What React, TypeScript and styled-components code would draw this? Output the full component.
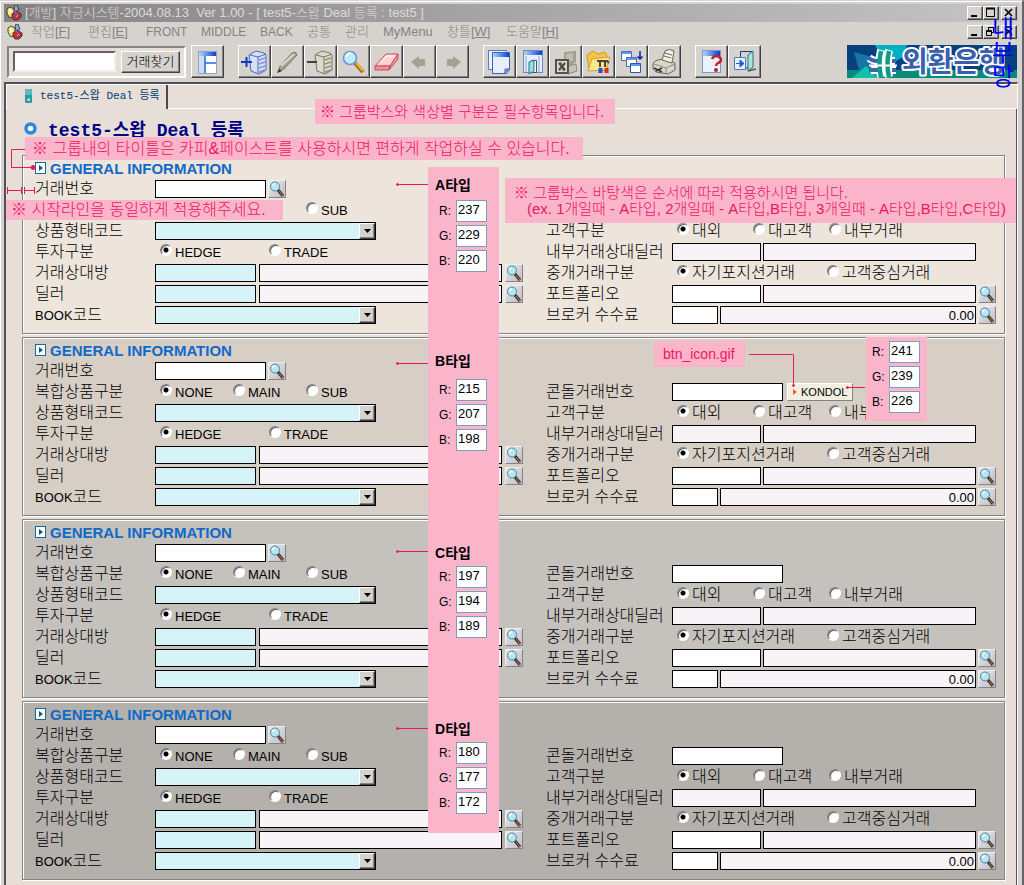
import React from 'react';
import styled, { createGlobalStyle, css } from 'styled-components';

const PINK = '#fbb5cb';
const MAGENTA = '#ee1460';
const FACE = '#d6d3ce';

const GlobalStyle = createGlobalStyle`
  * { box-sizing: border-box; }
  body {
    margin: 0;
    background: ${FACE};
    color: #000;
    font-family: 'Liberation Sans', 'Noto Sans CJK KR', sans-serif;
    font-weight: 300;
    font-size: 13px;
  }
  button, input, select { font: inherit; color: inherit; margin: 0; padding: 0; }
  h1, h2, p { margin: 0; }
`;

/* ---------- window frame ---------- */

const Window = styled.div`
  position: relative;
  display: flex;
  flex-direction: column;
  min-height: 100vh;
  min-width: 1024px;
  overflow: hidden;
  background: ${FACE};
  border-top: 1px solid ${FACE};
  border-right: 2px solid #63636b;
  padding: 3px 4px 0 4px;
  box-shadow: inset 1px 1px 0 #fff;
`;

const TitleBar = styled.header`
  display: flex;
  align-items: center;
  height: 18px;
  padding: 0 1px 0 2px;
  background: linear-gradient(to right, #848284, #a5a2a5 45%, #c6c3c6);
  color: #dedbd6;
  white-space: pre;
`;

const TitleText = styled.span`
  flex: 1;
  padding-left: 3px;
  line-height: 18px;
`;

const WindowButtons = styled.div`
  display: flex;
`;

const WindowButton = styled.button<{ $apart?: boolean }>`
  display: flex;
  width: 16px;
  height: 14px;
  margin-left: ${(p) => (p.$apart ? 2 : 0)}px;
  border: 1px solid;
  border-color: #fff #424142 #424142 #fff;
  box-shadow: inset -1px -1px 0 #848284;
  background: ${FACE};
`;

const MenuBar = styled.nav`
  display: flex;
  align-items: center;
  height: 20px;
  padding: 0 1px 0 3px;
  color: #848284;
`;

const MenuItems = styled.div`
  display: flex;
  flex: 1;
  padding-left: 8px;
`;

const MenuItem = styled.button<{ $w: number }>`
  width: ${(p) => p.$w}px;
  border: 0;
  background: none;
  text-align: left;
  white-space: nowrap;
  line-height: 18px;
`;

const MenuCaps = styled.span`
  font-size: 12px;
`;

const Spacer = styled.span`
  flex: 1;
`;

/* ---------- toolbar ---------- */

const Toolbar = styled.div`
  display: flex;
  align-items: center;
  height: 40px;
  padding: 0 1px 1px 3px;
`;

const SearchPanel = styled.form`
  display: flex;
  align-items: center;
  gap: 5px;
  width: 179px;
  height: 32px;
  margin-right: 5px;
  padding: 0 4px;
  background: #e7dfd7;
  border: 2px solid;
  border-color: #848284 #fff #fff #848284;
`;

const SearchInput = styled.input`
  flex: 1;
  min-width: 0;
  height: 21px;
  background: #fff;
  border: 2px solid;
  border-color: #63616b #efefef #efefef #63616b;
`;

const FindButton = styled.button`
  width: 59px;
  height: 22px;
  line-height: 18px;
  font-size: 13px;
  background: ${FACE};
  border: 1px solid;
  border-color: #fff #424142 #424142 #fff;
  box-shadow: inset -1px -1px 0 #848284;
`;

const ToolGroup = styled.div<{ $after?: number }>`
  display: flex;
  margin-right: ${(p) => p.$after ?? 0}px;
`;

const ToolButton = styled.button`
  display: flex;
  align-items: center;
  justify-content: center;
  width: 33px;
  height: 33px;
  background: ${FACE};
  border: 1px solid;
  border-color: #fff #424142 #424142 #fff;
  box-shadow: inset -1px -1px 0 #848284;
`;

/* ---------- workspace ---------- */

const Workspace = styled.main`
  flex: 1;
  display: flex;
  flex-direction: column;
  background: #e7dfd7;
  border: solid;
  border-width: 2px 1px 0 2px;
  border-color: #52515a #fff #fff #52515a;
`;

const TabBar = styled.div`
  display: flex;
  height: 25px;
  border-top: 1px solid #fff;
`;

const Tab = styled.button`
  display: flex;
  align-items: center;
  gap: 8px;
  width: 162px;
  padding: 0 0 3px 18px;
  border: 0;
  border-left: 1px solid #fff;
  border-right: 2px solid #4a494a;
  background: none;
  color: #003c73;
  font-family: 'Liberation Mono', 'Noto Sans CJK KR', monospace;
  font-size: 11px;
  font-weight: 400;
  line-height: 20px;
  white-space: pre;
`;

const TabRest = styled.div`
  flex: 1;
  border-bottom: 1px solid #fff;
`;

const Page = styled.div`
  flex: 1;
  padding: 10px 11px 5px 16px;
  border-right: 1px solid #52515a;
`;

const PageTitle = styled.h1`
  display: flex;
  align-items: center;
  gap: 11px;
  height: 20px;
  margin: 0 0 16px 2px;
  padding-bottom: 2px;
  color: #000084;
  font-family: 'Liberation Mono', 'Noto Sans CJK KR', monospace;
  font-size: 18px;
  font-weight: 700;
  white-space: pre;
`;

const Groups = styled.div`
  display: flex;
  flex-direction: column;
  gap: 3px;
`;

const Group = styled.section<{ $bg: string }>`
  padding: 0 8px 9px 12px;
  background: ${(p) => p.$bg};
  border: 1px solid #848284;
  box-shadow: inset 1px 1px 0 #fff, 1px 1px 0 #fff;
`;

const GroupTitle = styled.h2`
  display: flex;
  align-items: center;
  gap: 4px;
  height: 24px;
  color: #1069c6;
  font-size: 15px;
  font-weight: 700;
`;

const Columns = styled.div`
  display: flex;
`;

const Column = styled.div<{ $right?: boolean }>`
  display: flex;
  flex-direction: column;
  gap: 3px;
  ${(p) => (p.$right ? css`flex: 1; padding-top: 21px;` : css`width: 511px;`)}
`;

const Line = styled.div<{ $right?: boolean; $short?: boolean }>`
  display: grid;
  grid-template-columns: ${(p) => (p.$right ? 126 : 120)}px 1fr;
  height: 18px;
  padding-right: ${(p) => (p.$short ? 20 : 0)}px;
`;

const Caption = styled.label<{ $covered?: boolean }>`
  visibility: ${(p) => (p.$covered ? 'hidden' : 'visible')};
  font-size: 16px;
  line-height: 18px;
  white-space: nowrap;
`;

const Latin = styled.span`
  font-size: 13px;
`;

const Controls = styled.div<{ $gap?: number }>`
  display: flex;
  gap: ${(p) => p.$gap ?? 2}px;
`;

const tones = { white: '#fff', cyan: '#d6f3f7', pale: '#f7f3f7' };

const Field = styled.input<{ $w?: number; $tone?: keyof typeof tones }>`
  ${(p) => (p.$w ? css`width: ${p.$w}px;` : css`flex: 1; min-width: 0;`)}
  height: 18px;
  padding: 0 1px;
  border: 1px solid #000;
  background: ${(p) => tones[p.$tone ?? 'white']};
  text-align: right;
  line-height: 16px;
`;

const SelectBox = styled.span`
  position: relative;
  display: flex;
  width: 221px;
`;

const Select = styled.select`
  appearance: none;
  width: 100%;
  height: 18px;
  border: 1px solid #000;
  border-radius: 0;
  background: ${tones.cyan};
`;

const SelectArrow = styled.span`
  position: absolute;
  top: 1px;
  right: 1px;
  display: flex;
  align-items: center;
  justify-content: center;
  width: 16px;
  height: 16px;
  pointer-events: none;
  background: ${FACE};
  border: 1px solid;
  border-color: #fff #424142 #424142 #fff;
  box-shadow: inset -1px -1px 0 #848284;
`;

const LookupButton = styled.button`
  display: flex;
  width: 18px;
  height: 18px;
  background: linear-gradient(135deg, #e7e7ef, #bdbec6);
  border: 1px solid;
  border-color: #efefef #848284 #848284 #efefef;
`;

const RadioRow = styled.div`
  display: flex;
  padding-left: 5px;
`;

const Choice = styled.label<{ $w: number; $hangul?: boolean; $covered?: boolean }>`
  display: flex;
  visibility: ${(p) => (p.$covered ? 'hidden' : 'visible')};
  gap: 3px;
  width: ${(p) => p.$w}px;
  white-space: nowrap;
  font-size: ${(p) => (p.$hangul ? 16 : 13)}px;
  line-height: ${(p) => (p.$hangul ? 18 : 19)}px;
`;

const Radio = styled.input`
  appearance: none;
  flex: none;
  width: 12px;
  height: 12px;
  margin-top: 1px;
  border-radius: 50%;
  border: 1px solid;
  border-color: #848284 #fff #fff #848284;
  background: #fff;
  box-shadow: inset 1px 1px 0 #63616b;
  &:checked {
    background: radial-gradient(circle at 5px 5px, #000 2px, #fff 3px);
  }
`;

const KondolButton = styled.button`
  display: flex;
  align-items: center;
  gap: 4px;
  width: 66px;
  height: 18px;
  margin-left: 2px;
  padding-left: 5px;
  background: #f1efe2;
  border: 1px solid;
  border-color: #fff #848284 #848284 #fff;
  font-size: 11px;
`;

/* ---------- annotations lying over the form ---------- */

const Note = styled.p<{ $x: number; $y: number; $w: number; $h: number; $size?: number; $pad?: number }>`
  position: absolute;
  left: ${(p) => p.$x}px;
  top: ${(p) => p.$y}px;
  width: ${(p) => p.$w}px;
  height: ${(p) => p.$h}px;
  display: flex;
  flex-direction: column;
  justify-content: center;
  padding-left: ${(p) => p.$pad ?? 5}px;
  background: ${PINK};
  color: ${MAGENTA};
  font-size: ${(p) => p.$size ?? 16}px;
  line-height: 16px;
  white-space: pre;
`;

const NoteIndent = styled.span`
  padding-left: 13px;
`;

const Strip = styled.div<{ $x: number; $y: number; $w: number; $h: number }>`
  position: absolute;
  left: ${(p) => p.$x}px;
  top: ${(p) => p.$y}px;
  width: ${(p) => p.$w}px;
  height: ${(p) => p.$h}px;
  background: ${PINK};
`;

const Swatch = styled.div<{ $x: number; $y: number }>`
  position: absolute;
  left: ${(p) => p.$x}px;
  top: ${(p) => p.$y}px;
  display: flex;
  flex-direction: column;
  gap: 3px;
`;

const SwatchTitle = styled.strong<{ $y: number }>`
  position: absolute;
  left: 435px;
  top: ${(p) => p.$y}px;
  font-size: 14px;
  font-weight: 700;
  line-height: 20px;
`;

const SwatchRow = styled.label`
  display: flex;
  align-items: center;
  width: 48px;
  justify-content: space-between;
  font-size: 12px;
`;

const SwatchValue = styled.input`
  width: 31px;
  height: 22px;
  padding: 0 0 3px 1px;
  border: 1px solid #7b9ebd;
  background: #fff;
  font-size: 13px;
`;

const Connectors = styled.svg`
  position: absolute;
  left: 0;
  top: 0;
  pointer-events: none;
`;

const SideStamp = styled.div`
  position: absolute;
  top: 16px;
  right: 7px;
  width: 24px;
  color: #0000ff;
  font-size: 24px;
  font-weight: 400;
  line-height: 24px;
  text-align: center;
  word-break: break-all;
`;

/* ---------- drawings ---------- */

const AppIcon = () => (
  <svg width="16" height="16" viewBox="0 0 16 16" aria-hidden="true">
    <path d="M8 3l1-3h2l1 3 1 2-4 2z" fill="#9aa6d8" stroke="#222" strokeWidth=".8" />
    <path d="M1 4l3-2 4 2v5l-2 4-3-1-2-4z" fill="#f7e36b" stroke="#222" strokeWidth=".8" />
    <path d="M6 9l4-3 5 3v3l-3 3H8l-2-3z" fill="#c6303a" stroke="#222" strokeWidth=".8" />
    <path d="M3 4l1 3-2 2M5 5v3" stroke="#fff" fill="none" />
    <path d="M8 6l3 3" stroke="#5b6bc6" strokeWidth="2" />
    <path d="M10 12l2-2" stroke="#f7a0a0" />
  </svg>
);

const MinGlyph = () => (
  <svg width="14" height="12" viewBox="0 0 14 12"><path d="M3 9h6" stroke="#000" strokeWidth="2" /></svg>
);
const MaxGlyph = () => (
  <svg width="14" height="12" viewBox="0 0 14 12">
    <path d="M2.500 1v8.500h8V1" fill="none" stroke="#000" /><path d="M2 1.500h9" stroke="#000" strokeWidth="2" />
  </svg>
);
const RestoreGlyph = () => (
  <svg width="14" height="12" viewBox="0 0 14 12" fill="none" stroke="#000">
    <path d="M4.500 4V1.500h5v5H8M4 1.500h6" /><path d="M2.500 4.500h5v5h-5zM2 5.500h6" />
  </svg>
);
const CloseGlyph = () => (
  <svg width="14" height="12" viewBox="0 0 14 12"><path d="M3 2l7 7M10 2l-7 7" stroke="#000" strokeWidth="1.600" /></svg>
);

const sky = (id: string) => (
  <defs>
    <linearGradient id={id}>
      <stop offset="0" stopColor="#a9d9fb" />
      <stop offset="1" stopColor="#0a3fd0" />
    </linearGradient>
  </defs>
);

const icons: Record<string, React.ReactNode> = {
  layout: (
    <>
      {sky('g1')}
      <rect x="4.500" y="3.500" width="18" height="22" fill="#fff" stroke="#8fa3cc" />
      <rect x="5" y="4" width="17" height="4" fill="url(#g1)" />
      <rect x="5" y="8" width="6" height="17" fill="#cfdcf5" />
      <path d="M11 8v17M11 15h11" stroke="#1f6be0" strokeWidth="1.500" />
    </>
  ),
  add: (
    <>
      <path d="M8 7l7-4 8 2 2 2v15l-7 4-8-3z" fill="#d6e0fa" stroke="#5068b8" />
      <path d="M9 7l8 2 8-3M17 9v16" fill="none" stroke="#5068b8" />
      <path d="M18 12l6-2M18 16l6-2M18 20l6-2M18 24l6-2" stroke="#7f93d8" strokeWidth="1.500" />
      <path d="M0 14h11M5.500 9v10" stroke="#0b3fb8" strokeWidth="2" />
    </>
  ),
  edit: (
    <>
      <path d="M4 24l2-6L18 5q4-2 5 2L10 21z" fill="#a5a38a" stroke="#77766a" />
      <path d="M7 18L20 6" stroke="#dddbc4" strokeWidth="2" />
      <path d="M3 25l2-4 3 2z" fill="#333" />
    </>
  ),
  remove: (
    <>
      <path d="M8 7l7-4 8 2 2 2v15l-7 4-8-3z" fill="#dcdac8" stroke="#77766a" />
      <path d="M9 7l8 2 8-3M17 9v16" fill="none" stroke="#77766a" />
      <path d="M18 12l6-2M18 16l6-2M18 20l6-2M18 24l6-2" stroke="#94937f" strokeWidth="1.500" />
      <path d="M0 14h10" stroke="#44443c" strokeWidth="2" />
    </>
  ),
  search: (
    <>
      <path d="M15 15l8 9" stroke="#9a6410" strokeWidth="4" />
      <path d="M16 15l7 8" stroke="#f5b730" strokeWidth="2" />
      <circle cx="10" cy="10" r="6.500" fill="#bfeefa" stroke="#6d8fd8" strokeWidth="1.500" />
      <path d="M6 9q1-4 5-4" stroke="#fff" strokeWidth="2" fill="none" />
    </>
  ),
  erase: (
    <>
      <path d="M2 18L13 6h12l-8 12z" fill="#fbd3d6" stroke="#d0485a" />
      <path d="M2 18v4h14l1-4zM17 18l8-12v5l-9 11z" fill="#f0939c" stroke="#d0485a" />
      <path d="M8 14l6-6h7" stroke="#fff" fill="none" />
    </>
  ),
  back: <path d="M5 14l8-6v3h6v7h-6v3z" fill="#a3a18f" />,
  forward: <path d="M22 14l-8-6v3H8v7h6v3z" fill="#a3a18f" />,
  copy: (
    <>
      {sky('g2')}
      <path d="M2.500 2.500h18v19h-18z" fill="#e8f0fc" stroke="#5a79c8" />
      <path d="M6.500 4.500h17v17l-3 4h-14z" fill="#e8effc" stroke="#3f5fb8" />
      <path d="M7 5h16v4H7z" fill="url(#g2)" />
      <path d="M23 21h-4v4z" fill="#9fb4e8" stroke="#3f5fb8" />
    </>
  ),
  door: (
    <>
      {sky('g3')}
      <rect x="4.500" y="2.500" width="19" height="22" fill="#e4edfb" stroke="#6f88c0" />
      <rect x="5" y="3" width="18" height="4" fill="url(#g3)" />
      <path d="M7 8v16M20 8v16" stroke="#b7c9ec" strokeWidth="2" />
      <path d="M12.500 12.500h5v12h-5z" fill="#fff" stroke="#456" />
      <path d="M10 14l5-2v11l-5 3z" fill="#8fe0e0" stroke="#2f6f88" />
    </>
  ),
  excel: (
    <>
      <path d="M12 4l12-1v11l-4 3h-8z" fill="#a2a194" />
      <path d="M14 6l7-1v8h-7z" fill="#bdbcae" />
      <path d="M16 18l8-2 1 7-9 3z" fill="#c5c4b5" stroke="#8b8a7c" />
      <rect x="4" y="12" width="12" height="13" fill="#d8d6cc" stroke="#55544a" strokeWidth="2" />
      <path d="M7 15l6 7M13 15l-6 7" stroke="#44443c" strokeWidth="2" />
      <path d="M8 15h2M10 22h3" stroke="#44443c" />
    </>
  ),
  folder: (
    <>
      <path d="M2 7l6-4 5 3 7-2 2 5v13H4z" fill="#f4c545" stroke="#d39a20" />
      <path d="M3 23l4-12 18-2-4 13z" fill="#fde68a" stroke="#d8a52c" />
      <path d="M12 13h10l2 2M15 14v5M20 14v5" stroke="#444" strokeWidth="2" />
      <path d="M15.500 20v5" stroke="#1c4fd0" strokeWidth="4" />
      <path d="M21.500 20v5" stroke="#d62a2a" strokeWidth="4" />
    </>
  ),
  cascade: (
    <>
      <path d="M3.500 3.500h10v9h-10z" fill="#fff" stroke="#4a68bc" />
      <path d="M8.500 9.500h10v9h-10z" fill="#fff" stroke="#4a68bc" />
      <path d="M12.500 15.500h10v9h-10z" fill="#fff" stroke="#3554b0" />
      <path d="M4 5h9M9 11h9M13 17h9" stroke="#5d9bf0" strokeWidth="2" />
      <path d="M22 3v8M19.500 8.500L22 11l2.500-2.500" stroke="#0b22a0" strokeWidth="1.500" fill="none" />
    </>
  ),
  print: (
    <>
      <path d="M2 17q0-4 5-5l5-1 12 4v7l-7 4-12-2-3-3z" fill="#d9d7c8" stroke="#66655a" />
      <path d="M11 12l3-9q4-3 9 0l-2 12z" fill="#f4f2e4" stroke="#66655a" />
      <path d="M14 5l7 2M13 8l7 2" stroke="#66655a" />
      <path d="M3 16l12 4 9-4M15 20v6" fill="none" stroke="#8b8a7c" />
      <path d="M3 20l8 4M5 23l6-3" stroke="#333" strokeWidth="1.500" />
    </>
  ),
  help: (
    <>
      {sky('g4')}
      <rect x="4.500" y="2.500" width="18" height="22" fill="#e8f1fc" stroke="#7f97c6" />
      <rect x="5" y="3" width="17" height="5" fill="url(#g4)" />
      <path d="M14 11q1-3 5-3 4 1 4 4 0 2-3 3-2 1-2 3" fill="none" stroke="#c2202c" strokeWidth="2.500" />
      <circle cx="18" cy="22" r="2" fill="#c2202c" />
    </>
  ),
  exit: (
    <>
      <path d="M9.500 9V3.500h12V20H15" fill="none" stroke="#26386f" />
      <path d="M17 7l5-4v16l-5 4z" fill="#a6e6e0" stroke="#2f6f88" />
      <path d="M3.500 9.500h11v12h-11z" fill="#e5effd" stroke="#5a78b8" />
      <path d="M5 15.500h4M9 12l4 3.500L9 19z" stroke="#1262d8" fill="#1262d8" />
      <path d="M17 23l8-2" stroke="#556" strokeWidth="1.500" />
    </>
  ),
};

const Tool = ({ name, label }: { name: string; label: string }) => (
  <ToolButton type="button" aria-label={label}>
    <svg width="27" height="27" viewBox="0 0 27 27" fill="none">{icons[name]}</svg>
  </ToolButton>
);

const BankLogo = () => (
  <svg width="170" height="33" viewBox="0 0 170 33" role="img" aria-label="외환은행">
    <rect width="170" height="33" fill="#06407e" />
    <path d="M7 7l18 5 6 13-18 4z" fill="#1576a6" />
    <path d="M28 0h32l-4 12-14 8-8-8z" fill="#00b1c4" />
    <path d="M70 5q18 2 34 8l-4 12H64z" fill="#0c7fb6" />
    <path d="M0 25h170v8H0z" fill="#088a7d" />
    <path d="M5 33l14-12 12 12z" fill="#12c0ac" />
    <g fill="none" stroke="#fff" strokeWidth="8" strokeLinejoin="round">
      <path d="M22 13q6 4 12 3h14M24 25h25M34 5q-3 13 0 27M42 5q-3 13 0 27" />
      <path d="M33 20h15" />
    </g>
    <g fill="none" strokeWidth="4">
      <path d="M21 12q3 4 10 4M45 16h4M22 25h9M45 25h4" stroke="#3b66ae" />
      <path d="M34 6q-3 13 0 26M42 6q-3 13 0 26" stroke="#0f9b8a" strokeWidth="4.500" />
      <path d="M22 20.500h28" stroke="#fff" strokeWidth="2" />
    </g>
    <text
      x="55"
      y="27"
      fontSize="28"
      fontWeight="700"
      fontFamily="'Noto Sans CJK KR', sans-serif"
      fill="#3b5fae"
      stroke="#fff"
      strokeWidth="4"
      strokeLinejoin="round"
      paintOrder="stroke"
    >
      외환은행
    </text>
  </svg>
);

const Lens = () => (
  <svg width="16" height="16" viewBox="0 0 16 16" aria-hidden="true">
    <path d="M9 9l5 6" stroke="#3a2a20" strokeWidth="3" />
    <path d="M10 10l4 5" stroke="#c68a5a" />
    <circle cx="6" cy="5.500" r="4.500" fill="#b5e6f2" stroke="#4a8494" />
    <path d="M3.500 5q.5-2 2.500-2.500" stroke="#fff" strokeWidth="1.500" fill="none" />
  </svg>
);

/* ---------- form parts ---------- */

const Lookup = ({ label }: { label: string }) => (
  <LookupButton type="button" aria-label={label}><Lens /></LookupButton>
);

const Combo = ({ id }: { id: string }) => (
  <SelectBox>
    <Select id={id} />
    <SelectArrow>
      <svg width="7" height="4" viewBox="0 0 7 4"><path d="M0 0h7L3.500 4z" fill="#000" /></svg>
    </SelectArrow>
  </SelectBox>
);

type Option = [string, number];

type RadiosProps = { name: string; options: Option[]; hangul?: boolean; covered?: number };

const Radios = ({ name, options, hangul, covered = 0 }: RadiosProps) => (
  <RadioRow role="radiogroup">
    {options.map(([text, w], i) => (
      <Choice key={text} $w={w} $hangul={hangul} $covered={i < covered}>
        <Radio type="radio" name={name} defaultChecked={i === 0} />
        {text}
      </Choice>
    ))}
  </RadioRow>
);

type InfoGroupProps = { id: string; bg: string; kondol?: boolean; covered?: boolean };

/* `covered` hides the parts of the second row that lie beneath the notes. */
const InfoGroup = ({ id, bg, kondol, covered }: InfoGroupProps) => (
  <Group $bg={bg}>
    <GroupTitle>
      <svg width="11" height="12" viewBox="0 0 11 12" aria-hidden="true">
        <rect x=".5" y=".5" width="10" height="11" fill="#fff" stroke="#186a94" />
        <path d="M4 3l4 3-4 3z" fill="#18566e" />
      </svg>
      GENERAL INFORMATION
    </GroupTitle>
    <Columns>
      <Column>
        <Line>
          <Caption htmlFor={`${id}-no`}>거래번호</Caption>
          <Controls><Field id={`${id}-no`} $w={111} /><Lookup label="거래번호 찾기" /></Controls>
        </Line>
        <Line>
          <Caption as="span" $covered={covered}>복합상품구분</Caption>
          <Radios
            name={`${id}-complex`}
            options={[['NONE', 73], ['MAIN', 73], ['SUB', 60]]}
            covered={covered ? 2 : 0}
          />
        </Line>
        <Line>
          <Caption htmlFor={`${id}-type`}>상품형태코드</Caption>
          <Combo id={`${id}-type`} />
        </Line>
        <Line>
          <Caption as="span">투자구분</Caption>
          <Radios name={`${id}-invest`} options={[['HEDGE', 109], ['TRADE', 80]]} />
        </Line>
        <Line>
          <Caption htmlFor={`${id}-party`}>거래상대방</Caption>
          <Controls $gap={3}>
            <Field id={`${id}-party`} $w={101} $tone="cyan" />
            <Field aria-label="거래상대방 이름" $w={243} $tone="pale" />
            <Lookup label="거래상대방 찾기" />
          </Controls>
        </Line>
        <Line>
          <Caption htmlFor={`${id}-dealer`}>딜러</Caption>
          <Controls $gap={3}>
            <Field id={`${id}-dealer`} $w={101} $tone="cyan" />
            <Field aria-label="딜러 이름" $w={243} $tone="pale" />
            <Lookup label="딜러 찾기" />
          </Controls>
        </Line>
        <Line>
          <Caption htmlFor={`${id}-book`}><Latin>BOOK</Latin>코드</Caption>
          <Combo id={`${id}-book`} />
        </Line>
      </Column>
      <Column $right>
        <Line $right>
          {covered ? null : (
            <>
              <Caption htmlFor={`${id}-kondol`}>콘돌거래번호</Caption>
              <Controls>
                <Field id={`${id}-kondol`} $w={111} />
                {kondol && (
                  <KondolButton type="button">
                    <svg width="4" height="6" viewBox="0 0 4 6"><path d="M0 0l4 3-4 3z" fill="#f0641e" /></svg>
                    KONDOL
                  </KondolButton>
                )}
              </Controls>
            </>
          )}
        </Line>
        <Line $right>
          <Caption as="span">고객구분</Caption>
          <Radios hangul name={`${id}-client`} options={[['대외', 76], ['대고객', 76], ['내부거래', 80]]} />
        </Line>
        <Line $right $short>
          <Caption htmlFor={`${id}-inner`}>내부거래상대딜러</Caption>
          <Controls>
            <Field id={`${id}-inner`} $w={89} $tone="pale" />
            <Field aria-label="내부거래상대딜러 이름" $tone="pale" />
          </Controls>
        </Line>
        <Line $right>
          <Caption as="span">중개거래구분</Caption>
          <Radios hangul name={`${id}-broker`} options={[['자기포지션거래', 150], ['고객중심거래', 110]]} />
        </Line>
        <Line $right>
          <Caption htmlFor={`${id}-folio`}>포트폴리오</Caption>
          <Controls>
            <Field id={`${id}-folio`} $w={89} />
            <Field aria-label="포트폴리오 이름" $tone="pale" />
            <Lookup label="포트폴리오 찾기" />
          </Controls>
        </Line>
        <Line $right>
          <Caption htmlFor={`${id}-fee`}>브로커 수수료</Caption>
          <Controls>
            <Field id={`${id}-fee`} $w={46} />
            <Field aria-label="수수료 금액" $tone="pale" defaultValue="0.00" />
            <Lookup label="브로커 찾기" />
          </Controls>
        </Line>
      </Column>
    </Columns>
  </Group>
);

const Rgb = ({ x, y, values }: { x: number; y: number; values: number[] }) => (
  <Swatch $x={x} $y={y}>
    {values.map((v, i) => (
      <SwatchRow key={i}>
        {'RGB'[i]}:
        <SwatchValue defaultValue={v} />
      </SwatchRow>
    ))}
  </Swatch>
);

const menus: [React.ReactNode, number][] = [
  [<>작업[<u>F</u>]</>, 57],
  [<>편집[<u>E</u>]</>, 58],
  [<MenuCaps>FRONT</MenuCaps>, 55],
  [<MenuCaps>MIDDLE</MenuCaps>, 59],
  [<MenuCaps>BACK</MenuCaps>, 47],
  ['공통', 38],
  ['관리', 38],
  ['MyMenu', 64],
  [<>창틀[<u>W</u>]</>, 59],
  [<>도움말[<u>H</u>]</>, 70],
];

const groups = [
  { name: 'A', bg: '#ede5dc', rgb: [237, 229, 220], title: 175, values: 200, line: 184 },
  { name: 'B', bg: '#d7cfc6', rgb: [215, 207, 198], title: 351, values: 379, line: 363 },
  { name: 'C', bg: '#c5c2bd', rgb: [197, 194, 189], title: 543, values: 566, line: 551 },
  { name: 'D', bg: '#b4b1ac', rgb: [180, 177, 172], title: 719, values: 742, line: 728 },
];

export default function App() {
  return (
    <>
      <GlobalStyle />
      <Window>
        <TitleBar>
          <AppIcon />
          <TitleText>{'[개발] 자금시스템-2004.08.13  Ver 1.00 - [ test5-스왑 Deal 등록 : test5 ]'}</TitleText>
          <WindowButtons>
            <WindowButton aria-label="최소화"><MinGlyph /></WindowButton>
            <WindowButton aria-label="최대화"><MaxGlyph /></WindowButton>
            <WindowButton aria-label="닫기" $apart><CloseGlyph /></WindowButton>
          </WindowButtons>
        </TitleBar>
        <MenuBar>
          <AppIcon />
          <MenuItems>
            {menus.map(([text, w], i) => (
              <MenuItem key={i} type="button" $w={w}>{text}</MenuItem>
            ))}
          </MenuItems>
          <WindowButtons>
            <WindowButton aria-label="창 최소화"><MinGlyph /></WindowButton>
            <WindowButton aria-label="창 복원"><RestoreGlyph /></WindowButton>
            <WindowButton aria-label="창 닫기" $apart><CloseGlyph /></WindowButton>
          </WindowButtons>
        </MenuBar>
        <Toolbar>
          <SearchPanel>
            <SearchInput aria-label="거래번호" />
            <FindButton type="button">거래찾기</FindButton>
          </SearchPanel>
          <ToolGroup $after={14}><Tool name="layout" label="화면 배치" /></ToolGroup>
          <ToolGroup $after={14}>
            <Tool name="add" label="추가" />
            <Tool name="edit" label="수정" />
            <Tool name="remove" label="삭제" />
            <Tool name="search" label="조회" />
            <Tool name="erase" label="지우기" />
            <Tool name="back" label="이전" />
            <Tool name="forward" label="다음" />
          </ToolGroup>
          <ToolGroup $after={14}>
            <Tool name="copy" label="복사" />
            <Tool name="door" label="열기" />
            <Tool name="excel" label="엑셀" />
            <Tool name="folder" label="폴더" />
            <Tool name="cascade" label="창 정렬" />
            <Tool name="print" label="인쇄" />
          </ToolGroup>
          <ToolGroup>
            <Tool name="help" label="도움말" />
            <Tool name="exit" label="종료" />
          </ToolGroup>
          <Spacer />
          <BankLogo />
        </Toolbar>
        <Workspace>
          <TabBar>
            <Tab type="button">
              <svg width="7" height="14" viewBox="0 0 7 14" aria-hidden="true">
                <rect width="7" height="14" rx="1" fill="#2f9aa5" />
                <rect width="7" height="6" rx="1" fill="#63b8bf" />
                <path d="M2 11h3M4 9v2" stroke="#fff" />
              </svg>
              test5-스왑 Deal 등록
            </Tab>
            <TabRest />
          </TabBar>
          <Page>
            <PageTitle>
              <svg width="13" height="13" viewBox="0 0 13 13" aria-hidden="true">
                <circle cx="6.500" cy="6.500" r="4.500" fill="#fff" stroke="#2f86dc" strokeWidth="3.500" />
              </svg>
              test5-스왑 Deal 등록
            </PageTitle>
            <Groups>
              {groups.map((g) => (
                <InfoGroup
                  key={g.name}
                  id={g.name}
                  bg={g.bg}
                  kondol={g.name === 'B'}
                  covered={g.name === 'A'}
                />
              ))}
            </Groups>
          </Page>
        </Workspace>

        <Strip $x={428} $y={166} $w={71} $h={666} />
        <Note $x={315} $y={98} $w={300} $h={25} $size={15}>※ 그룹박스와 색상별 구분은 필수항목입니다.</Note>
        <Note $x={25} $y={136} $w={558} $h={23} $pad={7}>※ 그룹내의 타이틀은 카피&amp;페이스트를 사용하시면 편하게 작업하실 수 있습니다.</Note>
        <Note $x={6} $y={199} $w={277} $h={20}>※ 시작라인을 동일하게 적용해주세요.</Note>
        <Note $x={505} $y={177} $w={511} $h={45} $size={15} $pad={9}>
          <span>※ 그룹박스 바탕색은 순서에 따라 적용하시면 됩니다.</span>
          <NoteIndent>(ex. 1개일때 - A타입, 2개일때 - A타입,B타입, 3개일때 - A타입,B타입,C타입)</NoteIndent>
        </Note>
        <Note $x={654} $y={340} $w={91} $h={26} $size={14} $pad={9}>btn_icon.gif</Note>
        <Strip $x={866} $y={336} $w={61} $h={84} />
        <Rgb x={872} y={340} values={[241, 239, 226]} />
        {groups.map((g) => (
          <React.Fragment key={g.name}>
            <SwatchTitle $y={g.title - 1}>{g.name}타입</SwatchTitle>
            <Rgb x={439} y={g.values - 1} values={g.rgb} />
          </React.Fragment>
        ))}
        <Connectors width="1020" height="884" viewBox="0 1 1020 884" fill="none" stroke={MAGENTA} aria-hidden="true">
          {groups.map((g) => (
            <g key={g.name}>
              <path d={`M398 ${g.line + 0.5}H428`} />
              <circle cx="397.500" cy={g.line + 0.5} r="1" fill={MAGENTA} />
            </g>
          ))}
          <path d="M25 149.500H11.500V167.500H33" />
          <circle cx="33" cy="167.500" r="2" fill={MAGENTA} />
          <path d="M7 190.500H22M24 190.500H35M7.500 187v7M21.500 187v7M24.500 187v7M34.500 187v7" />
          <path d="M749 354.500H793.500V385" />
          <circle cx="793.500" cy="385.500" r="1" fill={MAGENTA} />
          <path d="M848 387.500H865" />
          <circle cx="847.500" cy="387.500" r="1" fill={MAGENTA} />
        </Connectors>
        <SideStamp>내부망</SideStamp>
      </Window>
    </>
  );
}
